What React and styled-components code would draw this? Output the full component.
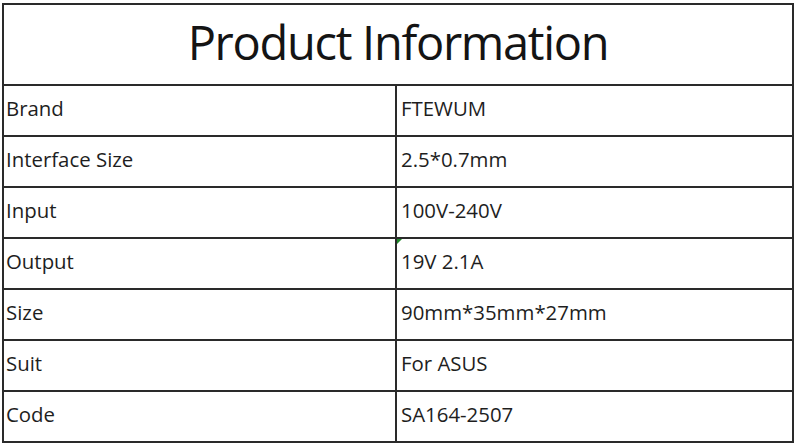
import React from "react";
import styled, { createGlobalStyle } from "styled-components";

const Global = createGlobalStyle`
  html, body { margin: 0; padding: 0; background: #ffffff; }
  body { font-family: "Open Sans", "Liberation Sans", sans-serif; color: #1c1c1c; }
`;

const Sheet = styled.div`
  padding: 3px 0 0 2px;
  width: 800px;
  height: 446px;
  box-sizing: border-box;
  overflow: hidden;
`;

const Table = styled.div`
  width: 792px;
  box-sizing: border-box;
  border: 2px solid #2a2a2a;
  border-bottom: none;
`;

const TitleRow = styled.div`
  display: flex;
  align-items: center;
  justify-content: center;
  height: 81px;
  padding-bottom: 5px;
  box-sizing: border-box;
  border-bottom: 2px solid #2a2a2a;
  font-size: 47px;
  letter-spacing: -1.3px;
  color: #141414;
`;

const Row = styled.div`
  display: grid;
  grid-template-columns: 393px 1fr;
  height: 51px;
  border-bottom: 2px solid #2a2a2a;
  box-sizing: border-box;
`;

const Cell = styled.div`
  position: relative;
  display: flex;
  align-items: center;
  padding: 0 0 5px ${(p) => (p.$divider ? "2px" : "4px")};
  font-size: 20.4px;
  color: #1e1e1e;
  border-right: ${(p) => (p.$divider ? "2px solid #2a2a2a" : "none")};
`;

const Marker = styled.span`
  position: absolute;
  top: 0;
  left: 0;
  width: 0;
  height: 0;
  border-top: 5px solid #1f8a2a;
  border-right: 5px solid transparent;
`;

const rows = [
  ["Brand", "FTEWUM"],
  ["Interface Size", "2.5*0.7mm"],
  ["Input", "100V-240V"],
  ["Output", "19V 2.1A", true],
  ["Size", "90mm*35mm*27mm"],
  ["Suit", "For ASUS"],
  ["Code", "SA164-2507"],
];

export default function App() {
  return (
    <>
      <Global />
      <Sheet>
        <Table>
          <TitleRow>Product Information</TitleRow>
          {rows.map(([k, v, mark]) => (
            <Row key={k}>
              <Cell $divider>{k}</Cell>
              <Cell>
                {mark && <Marker />}
                {v}
              </Cell>
            </Row>
          ))}
        </Table>
      </Sheet>
    </>
  );
}
